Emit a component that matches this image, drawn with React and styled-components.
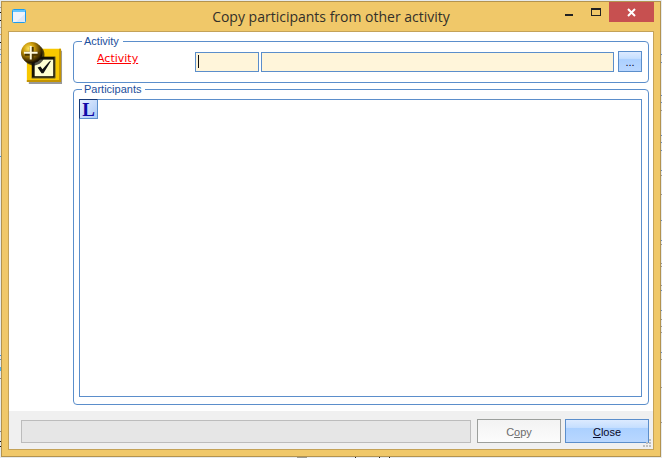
import React from "react";
import styled, { createGlobalStyle } from "styled-components";

const GlobalStyle = createGlobalStyle`
  * {
    box-sizing: border-box;
  }
  body {
    margin: 0;
    background: #e6eaec;
    font-family: "Liberation Sans", Arial, sans-serif;
    font-size: 11px;
  }
  button,
  input {
    font: inherit;
  }
`;

const mark = (color, y, height = 1) =>
  `linear-gradient(${color}, ${color}) 0 ${y}px / 1px ${height}px no-repeat`;
const markRight = (color, y, height = 1) =>
  `linear-gradient(${color}, ${color}) 100% ${y}px / 1px ${height}px no-repeat`;
const markBottom = (color, x, width = 1) =>
  `linear-gradient(${color}, ${color}) ${x}px 100% / ${width}px 1px no-repeat`;

// whatever is open behind the dialog
const desktopMarks = [
  mark("#a0a0a0", 7),
  mark("#111", 12),
  mark("#111", 20),
  mark("#a0a0a0", 27),
  mark("#e0a050", 34),
  mark("#111", 42),
  mark("#a0a0a0", 49),
  mark("#5b8ed6", 54),
  mark("#5b8ed6", 62),
  mark("#3f8fd8", 156),
  mark("#3f8fd8", 355),
  mark("#6a8fb0", 359),
  mark("#4fb0ee", 367, 4),
  mark("#888", 378),
  mark("#888", 431),
  mark("#111", 441),
  mark("#111", 446),
  ...[54, 62, 95, 102, 135, 142, 150, 170, 220, 240, 290, 310, 352].map(y =>
    markRight("#6c8fbd", y)
  ),
  ...[110, 175, 194, 244, 263, 266, 285, 319, 326, 332, 359, 387, 422].map(y =>
    markRight("#999", y)
  ),
  markBottom("#9a9a90", 297, 10),
  markBottom("#222", 355),
  markBottom("#222", 379),
  markBottom("#222", 389)
].join(", ");

const Desktop = styled.div`
  display: flex;
  min-height: 100vh;
  padding: 1px;
  background: ${desktopMarks};
`;

const Window = styled.main`
  display: flex;
  flex: 1;
  flex-direction: column;
  border: 1px solid #b3934f;
  background: #f0c869;
`;

const TitleBar = styled.header`
  display: grid;
  grid-template-columns: 1fr auto 1fr;
  height: 29px;
  padding: 0 6px;
`;

const WindowIcon = styled.svg`
  display: block;
  margin: 7px 0 0 4px;
`;

const Title = styled.h1`
  margin: 0;
  color: #33302a;
  font-family: "Open Sans", "Noto Sans", sans-serif;
  font-size: 14px;
  font-weight: 400;
  line-height: 29px;
`;

const WindowButtons = styled.div`
  display: flex;
  justify-content: flex-end;
`;

const WindowButton = styled.button`
  width: ${props => (props.$close ? "45px" : "27px")};
  height: 20px;
  padding: 0;
  border: 0;
  background: ${props => (props.$close ? "#c75050" : "transparent")};

  svg {
    display: block;
    margin: 0 auto;
  }
`;

const Client = styled.form`
  display: flex;
  flex: 1;
  flex-direction: column;
  margin: 0 6px 6px;
  border: 1px solid #c4a258;
  background: #fff;
`;

const Body = styled.div`
  display: flex;
  flex: 1;
  gap: 10px;
  padding: 3px 4px 6px 12px;
`;

const ActivityIcon = styled.svg`
  flex: none;
  margin-top: 7px;
`;

const Groups = styled.div`
  display: flex;
  flex: 1;
  flex-direction: column;
  min-width: 0;
`;

const Group = styled.fieldset`
  display: flex;
  flex: ${props => (props.$fill ? "1" : "none")};
  flex-direction: column;
  min-width: 0;
  margin: 0;
  padding: 3px 6px ${props => (props.$fill ? "7px" : "10px")} 5px;
  border: 1px solid #5b8ecb;
  border-radius: 4px;
`;

const Legend = styled.legend`
  margin-left: 3px;
  padding: 0 4px 0 2px;
  color: #1c4f9c;
  line-height: 13px;
`;

const FieldRow = styled.div`
  display: flex;
  align-items: flex-end;
  padding-left: 18px;
`;

const FieldLabel = styled.label`
  align-self: flex-start;
  width: 98px;
  color: #ff0000;
  font-family: "DejaVu Sans", Verdana, sans-serif;
  line-height: 16px;
  text-decoration: underline;
`;

const Field = styled.input`
  flex: ${props => (props.$wide ? "1" : "none")};
  width: 64px;
  min-width: 0;
  height: 20px;
  margin-right: ${props => (props.$wide ? "4px" : "2px")};
  padding: 0 2px;
  border: 1px solid #5b8ecb;
  outline: 0;
  background: ${props =>
    props.$active
      ? "linear-gradient(#111, #111) 2px 2px / 1px 13px no-repeat #fff5da"
      : "#fff5da"};
  caret-color: transparent;
`;

const Button = styled.button`
  width: 84px;
  height: 24px;
  padding: 2px 0 0;
  border: 1px solid #5b8ecb;
  background: linear-gradient(#dceaff 0, #c6dfff 34%, #abd0ff 36%, #b9d7ff 100%);
  color: #080828;

  &:disabled {
    border-color: #9c9f9c;
    background: linear-gradient(#f3f3f3, #fcfcfc);
    color: #6c6c6c;
  }
`;

const BrowseButton = styled(Button)`
  width: 24px;
  height: 21px;
  padding: 0;
`;

const List = styled.div`
  flex: 1;
  border: 1px solid #5b8ecb;
`;

const ListButton = styled.button`
  display: block;
  width: 19px;
  height: 20px;
  margin: -1px 0 0 -1px;
  padding: 0;
  border: 1px solid #5b8ecb;
  border-top-color: #163a78;
  border-left-color: #163a78;
  background: linear-gradient(135deg, #e4eeff, #a9c8f6);
  color: #1008a8;
  font-family: "Liberation Serif", "Times New Roman", serif;
  font-size: 19px;
  font-weight: 700;
  line-height: 20px;
`;

const Footer = styled.footer`
  position: relative;
  display: flex;
  align-items: flex-end;
  gap: 4px;
  padding: 8px 4px 6px 12px;
  background: #f0f0f0;
`;

const Progress = styled.progress`
  flex: 1;
  min-width: 0;
  height: 23px;
  margin-right: 2px;
  border: 1px solid #bcbcbc;
  background: #e6e6e6;
  appearance: none;

  &::-webkit-progress-bar {
    background: #e6e6e6;
  }
`;

const Grip = styled.svg`
  position: absolute;
  right: 2px;
  bottom: 2px;
`;

const ActivityGlyph = () => (
  <ActivityIcon width="42" height="43" viewBox="0 0 43 44" aria-hidden="true">
    <defs>
      <radialGradient id="ball" cx="36%" cy="30%" r="68%">
        <stop offset="0" stopColor="#ffe45a" />
        <stop offset="0.4" stopColor="#c99808" />
        <stop offset="0.75" stopColor="#644600" />
        <stop offset="1" stopColor="#1c1200" />
      </radialGradient>
      <filter id="shade" x="-20%" y="-20%" width="140%" height="140%">
        <feGaussianBlur stdDeviation="0.7" />
      </filter>
    </defs>
    <path d="M8 9h34v34H8z" fill="#555" opacity="0.6" filter="url(#shade)" />
    <path d="M6 7h35v34H6z" fill="#f8c800" />
    <path d="M6 39h35v2H6zM39 7h2v34h-2z" fill="#c49400" />
    <path d="M11 15h24v22H11z" fill="#151205" />
    <path d="M14 18h19v17H14z" fill="#ffffd2" />
    <path d="M11 37h24V15" fill="none" stroke="#96862c" />
    <path
      d="M17 26l3-1 2 3 7-8 2-1-8 13h-2z"
      fill="#111"
    />
    <circle cx="13" cy="13" r="11" fill="#111" opacity="0.7" filter="url(#shade)" />
    <circle cx="11" cy="11" r="11" fill="url(#ball)" />
    <path d="M11 5v14M4 12h14" stroke="#4b3500" strokeWidth="4" />
    <path d="M10 4v14M3 11h14" stroke="#fff8dc" strokeWidth="2" />
  </ActivityIcon>
);

export default class App extends React.Component {
  constructor(props) {
    super(props);
    this.state = { code: "", description: "" };
  }
  handleChange = e => {
    this.setState({ [e.target.name]: e.target.value });
  };
  handleSubmit = e => {
    e.preventDefault();
  };
  render() {
    const { code, description } = this.state;
    return (
      <Desktop>
        <GlobalStyle />
        <Window>
          <TitleBar>
            <WindowIcon width="14" height="14" viewBox="0 0 14 14">
              <rect x="0.5" y="0.5" width="13" height="13" rx="1" fill="#eef3fc" stroke="#1c9cf0" />
              <path d="M1 1h12v2H1z" fill="#62c4ff" />
              <path d="M13 5v8H4z" fill="#dfe7f6" />
            </WindowIcon>
            <Title>Copy participants from other activity</Title>
            <WindowButtons>
              <WindowButton type="button" aria-label="Minimize">
                <svg width="8" height="20">
                  <path d="M0 12h8v2H0z" fill="#222" />
                </svg>
              </WindowButton>
              <WindowButton type="button" aria-label="Maximize">
                <svg width="10" height="20">
                  <path d="M0 6h10v8H0zM1 8v5h8V8z" fill="#222" fillRule="evenodd" />
                </svg>
              </WindowButton>
              <WindowButton type="button" aria-label="Close window" $close>
                <svg width="9" height="20">
                  <path d="M1 7l7 7M8 7l-7 7" stroke="#fff" strokeWidth="2" />
                </svg>
              </WindowButton>
            </WindowButtons>
          </TitleBar>
          <Client onSubmit={this.handleSubmit}>
            <Body>
              <ActivityGlyph />
              <Groups>
                <Group>
                  <Legend>Activity</Legend>
                  <FieldRow>
                    <FieldLabel htmlFor="code">Activity</FieldLabel>
                    <Field
                      id="code"
                      name="code"
                      value={code}
                      onChange={this.handleChange}
                      $active={!code}
                    />
                    <Field
                      name="description"
                      aria-label="Activity description"
                      value={description}
                      onChange={this.handleChange}
                      $wide
                    />
                    <BrowseButton type="button" aria-label="Browse activities">
                      ...
                    </BrowseButton>
                  </FieldRow>
                </Group>
                <Group $fill>
                  <Legend>Participants</Legend>
                  <List>
                    <ListButton type="button">L</ListButton>
                  </List>
                </Group>
              </Groups>
            </Body>
            <Footer>
              <Progress value="0" max="100" aria-label="Copy progress" />
              <Button type="submit" disabled>
                C<u>o</u>py
              </Button>
              <Button type="button">
                <u>C</u>lose
              </Button>
              <Grip width="8" height="8" viewBox="0 0 8 8" aria-hidden="true">
                <path
                  d="M6 0h2v2H6zM3 3h2v2H3zM6 3h2v2H6zM0 6h2v2H0zM3 6h2v2H3zM6 6h2v2H6z"
                  fill="#bfbfbf"
                />
              </Grip>
            </Footer>
          </Client>
        </Window>
      </Desktop>
    );
  }
}
